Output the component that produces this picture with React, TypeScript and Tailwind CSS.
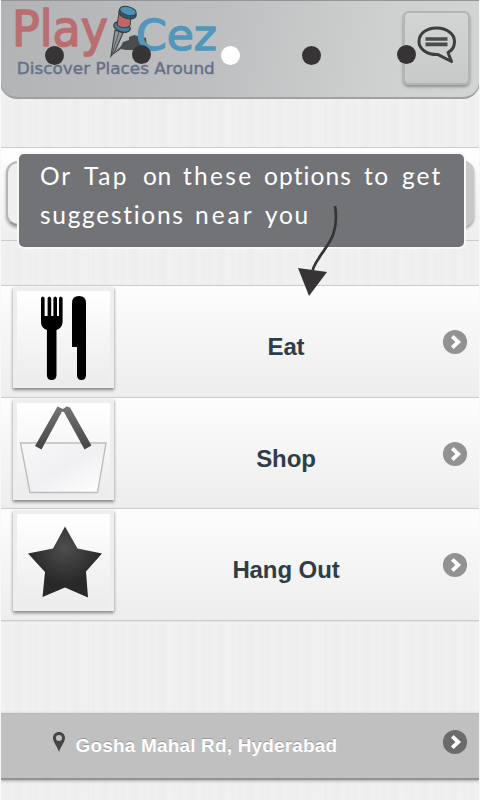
import React from "react";

const linen =
  "bg-[repeating-linear-gradient(90deg,#efefef_0px,#f1f1f1_3px,#eeeeee_5px,#f1f1f1_10px,#efefef_14px,#ededed_18px,#f1f1f1_23px,#efefef_29px)]";

function Chevron({ color }: { color: string }) {
  return (
    <svg width="26" height="26" viewBox="0 0 26 26" className="shrink-0">
      <circle cx="13" cy="13" r="12.1" fill={color} />
      <path d="M10.3 7.3 L16.3 13 L10.3 18.7" fill="none" stroke="#fff" strokeWidth="3.8" />
    </svg>
  );
}

function Logo() {
  return (
    <svg width="230" height="96" viewBox="0 0 230 96" fontFamily="'DejaVu Sans', sans-serif">
      <g fill="#b96f72" stroke="#b96f72" strokeWidth="1.6" strokeLinejoin="round">
        <text x="12" y="45.5" fontSize="49" textLength="96" lengthAdjust="spacingAndGlyphs">Play</text>
      </g>
      <path d="M111 56 L121 46 L123 42 L129 40 L129 37 L134 35 L146 38 L147 47 L138 47 L136 50 L126 50 L121 49 Z" fill="#4b4c4e" />
      <path d="M115 30 L123 33 L115 51 L111 56 Z" fill="#939597" stroke="#454545" strokeWidth="1.2" />
      <path d="M119 32 L112 54" stroke="#555" strokeWidth="1" />
      <ellipse cx="122" cy="27" rx="8.5" ry="4.8" transform="rotate(18 122 27)" fill="#3d7fa2" stroke="#343a3e" strokeWidth="1.2" />
      <path d="M119 13 L131 16 L130 26 Q124 30 117 25 Z" fill="#bd6768" stroke="#3c3c3e" strokeWidth="1" />
      <ellipse cx="127.5" cy="13.5" rx="9" ry="5" transform="rotate(16 127.5 13.5)" fill="#34566b" stroke="#343a3e" strokeWidth="1" />
      <ellipse cx="128" cy="11" rx="8.5" ry="4.3" transform="rotate(16 128 11)" fill="#4b91b4" stroke="#34393d" strokeWidth="1" />
      <g fill="#5297bb" stroke="#5297bb" strokeWidth="1.3" strokeLinejoin="round">
        <text x="136" y="50" fontSize="42" textLength="81" lengthAdjust="spacingAndGlyphs">Cez</text>
      </g>
      <text x="16.8" y="74" fontSize="15.5" fill="#64708a" stroke="#64708a" strokeWidth="0.4" textLength="198" lengthAdjust="spacingAndGlyphs">
        Discover Places Around
      </text>
    </svg>
  );
}

function Header() {
  return (
    <header className="relative z-10 flex h-[99px] justify-between rounded-b-[17px] border border-t-[#969497] border-x-[#9b9b9d] border-b-2 border-b-[#a0a1a2] bg-[linear-gradient(100deg,#b2b3b4,#bebfc0_45%,#cfd0d0_80%,#d3d4d4)]">
      <div className="-ml-px -mt-px">
        <Logo />
      </div>
      <div className="mr-[9px] mt-[10px] flex h-[74px] w-[67px] items-center justify-center rounded-[6px] border-2 border-[#b3b4b4] bg-linear-to-b from-[#d3d4d4] to-[#c8c9c9] shadow-[0_2px_3px_#8e8f8f]">
        <svg width="42" height="42" viewBox="0 0 42 42" className="-mt-[7px]">
          <path
            d="M20.5 4 C10 4 3 10 3 17.5 C3 25 11 31 22 30.6 L35.5 37.5 L32 28.5 C37 26 38.5 22 38.5 17.5 C38.5 10 31 4 20.5 4 Z"
            fill="none"
            stroke="#3c3f3e"
            strokeWidth="3"
            strokeLinejoin="round"
          />
          <path d="M9.5 15 H31.5 M9.5 20.4 H31.5" stroke="#494c4b" strokeWidth="3.6" />
        </svg>
      </div>
    </header>
  );
}

function Dots() {
  return (
    <div className="absolute left-[44px] top-[45px] z-20 flex items-start">
      <i className="mt-[0.5px] size-[19px] rounded-full bg-[#373435]" />
      <i className="-mt-[0.5px] ml-[67.5px] size-[19px] rounded-full bg-[#373435]" />
      <i className="mt-[0.5px] ml-[70.5px] size-[19px] rounded-full bg-white" />
      <i className="mt-[0.5px] ml-[61.5px] size-[19px] rounded-full bg-[#373435]" />
      <i className="-mt-[0.5px] ml-[76.5px] size-[19px] rounded-full bg-[#373435]" />
    </div>
  );
}

function Tip() {
  return (
    <div className="absolute left-[16px] top-[152px] z-20 h-[97px] w-[449px] rounded-[7px] border-2 border-[#f8f8f8] bg-[#727376] pl-[21px] pt-[2px] font-['Lato','Liberation_Sans',sans-serif] text-[24.5px] leading-[39px] text-white">
      <div className="flex whitespace-nowrap">
        <span className="w-[44px] tracking-[2px]">Or </span>
        <span className="w-[59px] tracking-[2.5px]">Tap </span>
        <span className="w-[40px] tracking-[0.5px]">on </span>
        <span className="w-[81px] tracking-[2.3px]">these </span>
        <span className="w-[100px] tracking-[1.1px]">options </span>
        <span className="w-[38px] tracking-[1.5px]">to </span>
        <span className="tracking-[2px]">get</span>
      </div>
      <div className="flex whitespace-nowrap">
        <span className="w-[155px] tracking-[1.7px]">suggestions </span>
        <span className="w-[70px] tracking-[3px]">near </span>
        <span className="tracking-[1.7px]">you</span>
      </div>
      <svg className="absolute left-[273px] top-[46px]" width="60" height="105" viewBox="292 200 60 105">
        <path d="M335 206 C340 236 325 247 319 258 C314 265 312 269 312 275" fill="none" stroke="#373435" strokeWidth="2.7" />
        <path d="M298 268 L327 272 L309 296 Z" fill="#373435" />
      </svg>
    </div>
  );
}

function Eat() {
  return (
    <svg width="93" height="93" viewBox="0 -1 93 93">
      <g fill="#000">
        <path d="M24 6 q1.7-3 3.6 0 V24 H30.6 V6 q1.7-3 3.6 0 V24 H36.4 V6 q1.7-3 3.6 0 V24 H42 V6 q1.7-3 3.6 0 V30 Q45.3 36 39.5 38 V83 q0 5-4.8 5 t-4.8-5 V38 Q24 36 24 30 Z" />
        <path d="M55 11 Q55 4 62 4 T69 11 V83 q0 5-4.5 5 T60 83 V55 H55 Z" />
      </g>
    </svg>
  );
}

function Shop() {
  return (
    <svg width="93" height="93" viewBox="0 -0.5 93 93">
      <defs>
        <linearGradient id="basket" x1="0" y1="0" x2="1" y2="1">
          <stop stopColor="#f8f8f9" />
          <stop offset=".5" stopColor="#f0f0f3" />
          <stop offset="1" stopColor="#fff" />
        </linearGradient>
        <linearGradient id="handle" x1="0" y1="0" x2="0" y2="1">
          <stop stopColor="#747474" />
          <stop offset="1" stopColor="#444" />
        </linearGradient>
      </defs>
      <path d="M3.5 39.5 H89 L80.5 89 H13 Z" fill="url(#basket)" stroke="#bdbdbd" strokeWidth="1.4" />
      <path d="M40.5 3 L46 5.5 L49.5 3 L53 4 L74.5 42 L67.5 46 L47 8.5 L45 8 L24.5 46 L18 42.5 Z" fill="url(#handle)" />
    </svg>
  );
}

function Star() {
  return (
    <svg width="93" height="93" viewBox="0 0 93 93">
      <defs>
        <radialGradient id="star" cx=".5" cy=".3">
          <stop stopColor="#4e4e4e" />
          <stop offset="1" stopColor="#292929" />
        </radialGradient>
      </defs>
      <path d="M48 12.5 L60.5 34.5 L85 39.5 L69 57.5 L71 83.5 L48 73.5 L25.5 83 L28 58 L11 39.5 L36 34.5 Z" fill="url(#star)" />
    </svg>
  );
}

function Row({ label, children }: { label: string; children: React.ReactNode }) {
  return (
    <div className="flex h-[111.5px] items-start border-b border-[#cbcbcb] bg-linear-to-b from-[#fdfdfd] to-[#ededed] font-['Liberation_Sans',Arial,sans-serif] shadow-[0_1px_0_#e4e4e4]">
      <div className="ml-[12px] mt-px h-[101px] w-[101px] shrink-0 border-4 border-[#eeeeee] bg-linear-to-b from-white to-[#ececec] shadow-[0_2px_3px_#858585]">
        {children}
      </div>
      <div className="mt-[47px] flex-1 pl-[31px] pr-[15px] text-center text-[24px] font-bold leading-7 tracking-[-0.1px] text-[#2f3e46]">
        {label}
      </div>
      <div className="mr-[11px] mt-[43px]">
        <Chevron color="#929292" />
      </div>
    </div>
  );
}

export default function App() {
  return (
    <main className={`relative flex h-[800px] w-[480px] flex-col overflow-hidden border-x border-x-[#f8f8f8] ${linen}`}>
      <div className="-mx-px h-[99px] shrink-0 bg-[#f0f0f0]">
        <Header />
      </div>
      <Dots />
      <section className="mt-12 flex h-[94px] shrink-0 items-center border-y border-[#cbcbcb] bg-linear-to-b from-white to-[#eeeeee] px-[5px]">
        <div className="-mt-px h-[65px] flex-1 rounded-l-[12px] border-2 border-[#b5b5b5] border-b-[#999] bg-[#efefef] shadow-[0_2px_3px_#aaa]" />
        <div className="-ml-6 -mt-px h-[67px] w-[48px] rounded-r-[12px] bg-[#c8c8c8] shadow-[0_2px_3px_#999]" />
      </section>
      <Tip />
      <section className="mt-[44px] shrink-0 border-t border-[#cbcbcb]">
        <Row label="Eat"><Eat /></Row>
        <Row label="Shop"><Shop /></Row>
        <Row label="Hang Out"><Star /></Row>
      </section>
      <footer className="mt-[92px] flex h-[67px] shrink-0 items-center border-y border-t-[#b8b8b8] border-b-2 border-b-[#939393] bg-[#c0c0c0] pl-[51px] pr-[11px] font-['Liberation_Sans',Arial,sans-serif] shadow-[0_1px_3px_#aaa]">
        <svg width="14" height="22" viewBox="0 0 14 22" className="-mt-2">
          <path fillRule="evenodd" d="M7 1 C3.4 1 1 3.5 1 7 C1 11 5 15 7 21 C9 15 13 11 13 7 C13 3.5 10.6 1 7 1 Z M7 4 A3 3 0 1 1 7 10 A3 3 0 1 1 7 4 Z" fill="#454545" />
        </svg>
        <span className="ml-[9.5px] mt-0.5 flex-1 text-[19px] font-bold tracking-[0.17px] text-white [text-shadow:0_-1px_0_#999]">Gosha Mahal Rd, Hyderabad</span>
        <div className="-mt-2">
          <Chevron color="#6b6b6b" />
        </div>
      </footer>
    </main>
  );
}
